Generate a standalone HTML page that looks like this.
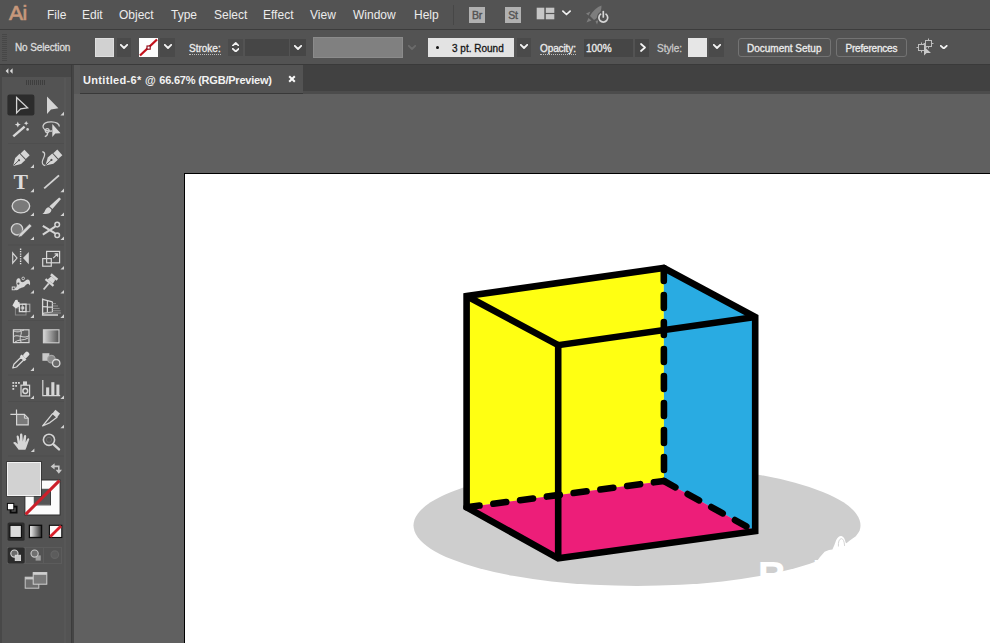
<!DOCTYPE html>
<html lang="en">
<head>
<meta charset="utf-8">
<title>Adobe Illustrator - Untitled-6</title>
<style>
html,body{margin:0;padding:0;background:#535353;}
body{width:990px;height:643px;overflow:hidden;position:relative;font-family:"Liberation Sans",sans-serif;color:#e6e6e6;}
#app{position:absolute;left:0;top:0;width:990px;height:643px;overflow:hidden;background:#535353;}
.abs{position:absolute;}
/* ---------- menu bar ---------- */
#menubar{left:0;top:0;width:990px;height:29px;background:#535353;}
#menubar .mi{position:absolute;top:8px;font-size:12px;line-height:15px;color:#ececec;white-space:nowrap;}
#ailogo{position:absolute;left:9px;top:1px;font-size:21px;line-height:24px;font-weight:normal;color:#c99b7c;letter-spacing:-0.4px;-webkit-text-stroke:0.7px #c4957a;}
.appbtn{position:absolute;top:7px;width:16px;height:16px;background:#b1b1b1;color:#535353;font-size:10.5px;line-height:17px;text-align:center;font-weight:normal;-webkit-text-stroke:0.4px #535353;letter-spacing:-0.3px;}
/* ---------- control bar ---------- */
#ctrlbar{left:0;top:29.4px;width:990px;height:35.6px;background:#535353;border-top:1px solid #3c3c3c;border-bottom:1px solid #3a3a3a;box-sizing:border-box;}
.ct{position:absolute;font-size:10px;line-height:12px;color:#ececec;white-space:nowrap;-webkit-text-stroke:0.3px;}
.dotted{border-bottom:1px dotted #bdbdbd;}
.dd{position:absolute;top:38px;height:19px;width:16px;background:#4a4a4a;}
.field{position:absolute;top:38px;height:19px;background:#464646;}
.cbtn{position:absolute;top:38px;height:18px;border:1px solid #737373;border-radius:3px;font-size:10px;line-height:18px;color:#f0f0f0;text-align:center;box-sizing:content-box;}
/* ---------- tab bar ---------- */
#tabbar{left:74px;top:65px;width:916px;height:29px;background:linear-gradient(to bottom,#414141 0,#414141 25.5px,#4c4c4c 26px,#4c4c4c 29px);}
#tab{left:79.5px;top:65px;width:223.5px;height:28px;background:#535353;border-bottom:1px solid #393939;}
#tabtxt{left:83px;top:73.5px;font-size:11px;line-height:13px;font-weight:bold;color:#f2f2f2;white-space:nowrap;}
/* ---------- canvas ---------- */
#canvas{left:74px;top:94px;width:916px;height:549px;background:#606060;}
#artboard{left:184px;top:173px;width:820px;height:500px;background:#fff;border:1px solid #000;}
/* ---------- toolbar ---------- */
#toolbar{left:0;top:65px;width:72px;height:578px;background:#535353;}
#tbhead{left:0;top:65px;width:72px;height:12px;background:#474747;}
</style>
</head>
<body>
<div id="app">

<!-- ================= MENU BAR ================= -->
<div id="menubar" class="abs">
  <div id="ailogo">Ai</div>
  <div class="mi" style="left:47px">File</div>
  <div class="mi" style="left:82px">Edit</div>
  <div class="mi" style="left:119px">Object</div>
  <div class="mi" style="left:171px">Type</div>
  <div class="mi" style="left:214px">Select</div>
  <div class="mi" style="left:263px">Effect</div>
  <div class="mi" style="left:310px">View</div>
  <div class="mi" style="left:353px">Window</div>
  <div class="mi" style="left:414px">Help</div>
  <div class="abs" style="left:453px;top:5px;width:1px;height:20px;background:#474747"></div>
  <div class="appbtn" style="left:469px">Br</div>
  <div class="appbtn" style="left:505px">St</div>
  <!-- arrange documents -->
  <svg class="abs" style="left:536px;top:7px" width="20" height="14" viewBox="0 0 20 14">
    <rect x="0.7" y="0.7" width="7.6" height="11.6" fill="#c6c6c6"/>
    <rect x="9.8" y="0.7" width="8.5" height="5.2" fill="#c6c6c6"/>
    <rect x="9.8" y="7.1" width="8.5" height="5.2" fill="#c6c6c6"/>
  </svg>
  <svg class="abs" style="left:562.3px;top:10.2px" width="9" height="6.3" viewBox="0 0 10 7"><polyline points="1,1.2 5,5 9,1.2" fill="none" stroke="#f2f2f2" stroke-width="1.9" stroke-linecap="round" stroke-linejoin="round"/></svg>
  <!-- gpu/rocket + power -->
  <svg class="abs" style="left:584px;top:3px" width="28" height="24" viewBox="0 0 28 24">
    <g fill="#7d7d7d">
      <path d="M17.5 2.5 C13 4 8.5 8 6 13 L10 17 C14.5 14.5 17.5 9 17.5 2.5Z"/>
      <path d="M6.5 8.5 L2 10.5 L4.5 12.5Z"/>
      <path d="M11.5 18.5 L13 21.5 L15 16Z"/>
      <path d="M4.5 15 L2.5 19.5 L7.5 17.5Z"/>
    </g>
    <circle cx="19.3" cy="14.6" r="4.3" fill="none" stroke="#535353" stroke-width="4.2"/>
    <path d="M16.6 11.2 A4.4 4.4 0 1 0 22 11.2" fill="none" stroke="#d6d6d6" stroke-width="1.7" stroke-linecap="round"/>
    <line x1="19.3" y1="8.6" x2="19.3" y2="14" stroke="#d6d6d6" stroke-width="1.7" stroke-linecap="round"/>
  </svg>
</div>

<!-- ================= CONTROL BAR ================= -->
<div id="ctrlbar" class="abs"></div>
<!-- grip -->
<div class="abs" style="left:2px;top:34px;width:5px;height:27px;background:repeating-linear-gradient(to bottom,#474747 0,#474747 1px,#535353 1px,#535353 2px)"></div>
<div class="ct" style="left:15px;top:41.7px;color:#dcdcdc;letter-spacing:-0.12px">No Selection</div>
<!-- fill swatch -->
<div class="abs" style="left:95px;top:38px;width:17px;height:17px;background:#d1d1d1;border:1px solid #dedede"></div>
<div class="dd" style="left:117px;width:14px"></div><svg class="abs" style="left:120px;top:44px" width="8" height="5" viewBox="0 0 8 5"><polyline points="0.8,0.8 4.0,4 7.2,0.8" fill="none" stroke="#f4f4f4" stroke-width="1.8" stroke-linecap="round" stroke-linejoin="round"/></svg>
<!-- stroke swatch -->
<div class="abs" style="left:139px;top:38px;width:19px;height:19px;background:#fdfdfd"></div>
<svg class="abs" style="left:139px;top:38px" width="19" height="19" viewBox="0 0 19 19"><line x1="1" y1="17.5" x2="18" y2="1.5" stroke="#c4121c" stroke-width="2.3"/><rect x="8" y="8" width="3.2" height="3.2" fill="#fff" stroke="#8c0010" stroke-width="1.1"/></svg>
<div class="dd" style="left:160px;width:15px"></div><svg class="abs" style="left:164px;top:44px" width="8" height="5" viewBox="0 0 8 5"><polyline points="0.8,0.8 4.0,4 7.2,0.8" fill="none" stroke="#f4f4f4" stroke-width="1.8" stroke-linecap="round" stroke-linejoin="round"/></svg>
<!-- stroke weight -->
<div class="ct dotted" style="left:189px;top:43px;line-height:11px">Stroke:</div>
<div class="field" style="left:228px;width:15px;top:39px;height:17px;background:#4b4b4b"></div>
<svg class="abs" style="left:231.5px;top:47.5px" width="7.5" height="4.5" viewBox="0 0 7.5 4.5"><polyline points="0.8,0.8 3.75,3.5 6.7,0.8" fill="none" stroke="#f4f4f4" stroke-width="1.8" stroke-linecap="round" stroke-linejoin="round"/></svg>
<svg class="abs" style="left:231.5px;top:41.5px" width="7.5" height="4.5" viewBox="0 0 7.5 4.5"><polyline points="0.8,3.7 3.75,0.9 6.7,3.7" fill="none" stroke="#f4f4f4" stroke-width="1.6" stroke-linecap="round" stroke-linejoin="round"/></svg>
<div class="field" style="left:245px;width:44px;top:39px;height:17px"></div>
<div class="field" style="left:290px;width:16px;top:39px;height:17px"></div><svg class="abs" style="left:294px;top:45px" width="8" height="5" viewBox="0 0 8 5"><polyline points="0.8,0.8 4.0,4 7.2,0.8" fill="none" stroke="#f4f4f4" stroke-width="1.8" stroke-linecap="round" stroke-linejoin="round"/></svg>
<!-- variable width profile (disabled) -->
<div class="abs" style="left:313px;top:37px;width:88px;height:19px;background:#808080;border:1px solid #8b8b8b"></div>
<svg class="abs" style="left:408px;top:45px" width="8" height="5" viewBox="0 0 8 5"><polyline points="0.8,0.8 4.0,4 7.2,0.8" fill="none" stroke="#6b6b6b" stroke-width="1.8" stroke-linecap="round" stroke-linejoin="round"/></svg>
<!-- brush definition -->
<div class="abs" style="left:428px;top:38px;width:86px;height:19px;background:#e3e3e3"></div>
<div class="abs" style="left:436px;top:46px;width:3px;height:3px;border-radius:2px;background:#111"></div>
<div class="ct" style="left:452px;top:42.6px;color:#151515">3 pt. Round</div>
<div class="dd" style="left:517px;width:14px"></div><svg class="abs" style="left:520px;top:44px" width="8" height="5" viewBox="0 0 8 5"><polyline points="0.8,0.8 4.0,4 7.2,0.8" fill="none" stroke="#f4f4f4" stroke-width="1.8" stroke-linecap="round" stroke-linejoin="round"/></svg>
<!-- opacity -->
<div class="ct dotted" style="left:540px;top:43px;line-height:11px;letter-spacing:-0.1px">Opacity:</div>
<div class="field" style="left:584px;width:49px;top:39px;height:18px"></div>
<div class="ct" style="left:586px;top:42.6px">100%</div>
<div class="field" style="left:635px;width:14px;top:39px;height:18px"></div>
<svg class="abs" style="left:639.5px;top:43px" width="6" height="9" viewBox="0 0 6 9"><polyline points="1,1 5,4.5 1,8" fill="none" stroke="#f4f4f4" stroke-width="1.7" stroke-linecap="round" stroke-linejoin="round"/></svg>
<!-- style -->
<div class="ct" style="left:657px;top:42.6px;color:#c9c9c9">Style:</div>
<div class="abs" style="left:688px;top:38px;width:19px;height:19px;background:#e6e6e6"></div>
<div class="dd" style="left:709px;width:15px"></div><svg class="abs" style="left:713px;top:44px" width="8" height="5" viewBox="0 0 8 5"><polyline points="0.8,0.8 4.0,4 7.2,0.8" fill="none" stroke="#f4f4f4" stroke-width="1.8" stroke-linecap="round" stroke-linejoin="round"/></svg>
<!-- buttons -->
<div class="cbtn" style="left:738px;width:91px;height:17px"></div>
<div class="ct" style="left:747px;top:42.6px">Document Setup</div>
<div class="cbtn" style="left:836px;width:69px;height:17px"></div>
<div class="ct" style="left:845.5px;top:42.6px;letter-spacing:-0.2px">Preferences</div>
<!-- align-to icon -->
<svg class="abs" style="left:916px;top:38px" width="19" height="19" viewBox="0 0 19 19">
  <g fill="none" stroke="#bdbdbd" stroke-width="1">
    <rect x="2.5" y="6.5" width="6" height="6"/>
    <rect x="9.5" y="2.5" width="6" height="6"/>
    <path d="M0.5 9.5h2M8.5 9.5h2M5.5 4.5v2M5.5 12.5v2M12.5 0.5v2M12.5 8.5v2M7.5 5.5h2M15.5 5.5h2"/>
  </g>
  <path d="M8 8.5 L8 17.5 L10.6 15 L15 15 Z" fill="#c9c9c9"/>
</svg>
<svg class="abs" style="left:940px;top:44.5px" width="7.5" height="4.5" viewBox="0 0 7.5 4.5"><polyline points="0.8,0.8 3.75,3.5 6.7,0.8" fill="none" stroke="#f4f4f4" stroke-width="1.8" stroke-linecap="round" stroke-linejoin="round"/></svg>

<!-- ================= TAB BAR ================= -->
<div id="tabbar" class="abs"></div>
<div class="abs" style="left:74px;top:65px;width:5.5px;height:29px;background:#585858"></div>
<div id="tab" class="abs"></div>
<div id="tabtxt" class="abs"><span style="letter-spacing:0.32px">Untitled-6* @ </span><span style="letter-spacing:-0.22px">66.67% (RGB/Preview)</span></div>
<svg class="abs" style="left:288px;top:75px" width="8" height="8" viewBox="0 0 8 8"><path d="M1.2 1.2 L6.8 6.8 M6.8 1.2 L1.2 6.8" stroke="#fafafa" stroke-width="2" stroke-linecap="butt"/></svg>

<!-- ================= CANVAS ================= -->
<div id="canvas" class="abs"></div>
<div id="artboard" class="abs"></div>
<svg id="art" class="abs" style="left:185px;top:174px" width="805" height="469" viewBox="185 174 805 469">
  <!-- shadow -->
  <ellipse cx="637" cy="525.5" rx="223.5" ry="60.5" fill="#cecece"/>
  <!-- watermark (white, only visible over the shadow) -->
  <g fill="#ffffff">
    <text x="757.7" y="590.3" font-family="Liberation Sans, sans-serif" font-weight="bold" font-size="40" letter-spacing="1.6">Bai</text>
    <path d="M815.5 566 L816 562.6 L819.8 557.2 L824.6 551.8 L829 550 L832.4 549.6 L834.4 545 L836.2 540 Q838.5 535.6 841.4 536 Q844.6 536.6 845.6 542.6 L846.4 543.2 L849.8 540.4 L855.8 536.2 L859.6 531 L872 531 L872 580 L815.5 580 Z"/>
  </g>
  <path d="M838.4 546.5 Q838 539.4 841.3 538.6 Q844.2 538.8 844.6 546" fill="none" stroke="#d0d0d0" stroke-width="0.9"/>
  <!-- faces -->
  <polygon points="466.6,296 663.8,268 664,481 466.6,507.3" fill="#ffff12"/>
  <polygon points="663.8,268 755.2,317 755.2,531.2 664,481" fill="#29abe2"/>
  <polygon points="466.6,507.3 664,481 755.2,531.2 558.2,558.3" fill="#ed1e79"/>
  <!-- hidden (dashed) edges -->
  <g fill="none" stroke="#000" stroke-width="6.6" stroke-linecap="round" stroke-dasharray="13 14">
    <path d="M663.8 268 L664 481"/>
    <path d="M466.6 507.3 L664 481"/>
    <path d="M664 481 L755.2 531.2"/>
  </g>
  <!-- visible edges -->
  <g fill="none" stroke="#000" stroke-width="6.6" stroke-linejoin="miter" stroke-miterlimit="10" stroke-linecap="butt">
    <path d="M466.6 296 L663.8 268 L755.2 317 L755.2 531.2 L558.2 558.3 L466.6 507.3 Z"/>
    <path d="M466.6 296 L558.2 345.2 L755.2 317"/>
    <path d="M558.2 345.2 V558.3"/>
  </g>
</svg>

<!-- ================= TOOLBAR ================= -->
<div id="toolbar" class="abs"></div>
<div id="tbhead" class="abs"></div>
<div class="abs" style="left:0;top:65px;width:2px;height:578px;background:#484848"></div>
<div class="abs" style="left:71.2px;top:65px;width:2.7px;height:578px;background:linear-gradient(to right,#3c3c3c 0,#3c3c3c 40%,#454545 40%,#454545 100%)"></div>
<div class="abs" style="left:64px;top:78px;width:1.6px;height:565px;background:#575757"></div>
<svg id="tools" class="abs" style="left:0;top:65px" width="72" height="578" viewBox="0 65 72 578">
  <!-- collapse chevrons + grip -->
  <path d="M8.4 68.3 L5.6 71 L8.4 73.7Z M12.6 68.3 L9.8 71 L12.6 73.7Z" fill="#dadada"/>
  <g stroke="#3e3e3e" stroke-width="1"><path d="M26.5 80v5M28.5 80v5M30.5 80v5M32.5 80v5M34.5 80v5M36.5 80v5M38.5 80v5M40.5 80v5M42.5 80v5M44.5 80v5"/></g>
  <g fill="#4e4e4e"><rect x="8" y="143" width="56" height="1"/><rect x="8" y="244.5" width="56" height="1"/><rect x="8" y="320" width="56" height="1"/><rect x="8" y="374.5" width="56" height="1"/><rect x="8" y="401" width="56" height="1"/><rect x="8" y="455.5" width="56" height="1"/></g>
  <g fill="#d2d2d2"><path d="M64 111.80000000000001V115.4H60.4Z"/><path d="M34 164.3V167.9H30.4Z"/><path d="M34 188.6V192.2H30.4Z"/><path d="M64 188.6V192.2H60.4Z"/><path d="M34 212.5V216.1H30.4Z"/><path d="M64 212.5V216.1H60.4Z"/><path d="M34 236.4V240H30.4Z"/><path d="M64 236.4V240H60.4Z"/><path d="M34 266.0V269.6H30.4Z"/><path d="M64 266.0V269.6H60.4Z"/><path d="M34 289.9V293.5H30.4Z"/><path d="M64 289.9V293.5H60.4Z"/><path d="M34 314.29999999999995V317.9H30.4Z"/><path d="M64 314.29999999999995V317.9H60.4Z"/><path d="M34 367.29999999999995V370.9H30.4Z"/><path d="M34 395.4V399H30.4Z"/><path d="M64 395.4V399H60.4Z"/><path d="M64 424.7V428.3H60.4Z"/><path d="M34.4 448.4V452H30.799999999999997Z"/></g>
  <!-- selection (active) -->
  <rect x="7.4" y="94.5" width="27" height="21" rx="2.2" fill="#2c2c2c"/>
  <path d="M16.6 97.6 L16.6 113 L20.6 108.9 L27.6 107.8 Z" fill="none" stroke="#d4d4d4" stroke-width="1.3" stroke-linejoin="miter"/>
  <!-- direct selection -->
  <path d="M47 96.6 L47 114 L51 109.6 L58.4 108.3 Z" fill="#d4d4d4"/>
  <!-- magic wand -->
  <path d="M13.3 136.4 L24.6 126.6" stroke="#d8d8d8" stroke-width="2.4" stroke-linecap="butt"/>
  <path d="M17.8 121.6 l0.9 2.1 2.1 0.9 -2.1 0.9 -0.9 2.1 -0.9 -2.1 -2.1 -0.9 2.1 -0.9Z" fill="#d8d8d8"/>
  <path d="M26.2 121 l0.7 1.6 1.6 0.7 -1.6 0.7 -0.7 1.6 -0.7 -1.6 -1.6 -0.7 1.6 -0.7Z" fill="#d8d8d8"/>
  <circle cx="27.6" cy="129.4" r="1.3" fill="#d8d8d8"/>
  <!-- lasso -->
  <g fill="none" stroke="#d0d0d0" stroke-width="1.3">
    <path d="M52 131 C46 131.5 42.6 129 43 126.2 C43.5 123 47.5 121.7 51.5 121.8 C56 121.9 59.4 123.6 59.3 126.4"/>
    <circle cx="47.2" cy="130.6" r="1.9"/>
    <path d="M47.6 132.5 C47.8 134.5 46.5 136 44.8 136.6"/>
  </g>
  <path d="M52.3 124 L52.3 137 L55.3 133.6 L60.6 133.2 Z" fill="#d8d8d8"/>
  <!-- pen -->
  <g transform="translate(13.1 165.9) rotate(-44)">
    <path d="M0 0 L7 -4.2 L13 -4.2 L13 4.2 L7 4.2 Z" fill="#d6d6d6"/>
    <rect x="14" y="-3.8" width="5.4" height="7.6" fill="#d6d6d6"/>
    <path d="M0.5 0 H7.5" stroke="#535353" stroke-width="0.9"/><circle cx="8.2" cy="0" r="1.1" fill="#535353"/>
  </g>
  <!-- curvature -->
  <g transform="translate(45.4 165.4) rotate(-42)">
    <path d="M0 0 L7 -4.2 L13 -4.2 L13 4.2 L7 4.2 Z" fill="#d6d6d6"/>
    <rect x="14" y="-3.8" width="5.4" height="7.6" fill="#d6d6d6"/>
    <path d="M0.5 0 H7.5" stroke="#535353" stroke-width="0.9"/><circle cx="8.2" cy="0" r="1.1" fill="#535353"/>
  </g>
  <path d="M42.3 151.6 C46.5 152.5 44.2 157 42.6 160.4 C41.6 163 42.6 165.2 45.2 165.6" fill="none" stroke="#d0d0d0" stroke-width="1.2"/>
  <!-- type -->
  <text x="0" y="0" transform="translate(13.6 188.7) scale(1.06 1)" font-family="Liberation Serif, serif" font-weight="bold" font-size="20.5" fill="#dcdcdc">T</text>
  <!-- line segment -->
  <path d="M44.2 188.4 L59 175.4" stroke="#d2d2d2" stroke-width="1.9"/>
  <!-- ellipse -->
  <ellipse cx="20.9" cy="206.1" rx="8.8" ry="6.8" fill="#7a7a7a" stroke="#d8d8d8" stroke-width="1.3"/>
  <!-- paintbrush -->
  <path d="M59.2 197.4 L61 199 L52.4 209 L49.4 206.2 Z" fill="#d6d6d6"/>
  <path d="M49 207.2 L51.4 209.4 C51.6 212.6 48 214.6 42.4 214 C45.4 212.6 44.6 207.6 49 207.2Z" fill="#d6d6d6"/>
  <!-- shaper -->
  <circle cx="17" cy="229.3" r="5.7" fill="#7a7a7a" stroke="#d2d2d2" stroke-width="1.3"/>
  <path d="M29.6 223.8 L31.8 226 L21.6 236.2 L18 237.6 L19.4 234 Z" fill="#d6d6d6" stroke="#535353" stroke-width="0.6"/>
  <!-- scissors -->
  <g stroke="#d4d4d4" fill="none">
    <path d="M42.8 225.8 L55.2 233.4" stroke-width="2"/>
    <path d="M42.8 234.6 L55.2 226.6" stroke-width="2"/>
    <circle cx="57.2" cy="224.6" r="2.3" stroke-width="1.5"/>
    <circle cx="57.2" cy="235.2" r="2.3" stroke-width="1.5"/>
  </g>
  <!-- reflect -->
  <path d="M12.7 253 L12.7 263.2 L17 258.1 Z" fill="none" stroke="#d2d2d2" stroke-width="1.2"/>
  <path d="M28.8 252 L28.8 264.2 L23 258.1 Z" fill="#d4d4d4"/>
  <path d="M20.6 248.6 V265" stroke="#e0e0e0" stroke-width="1.4" stroke-dasharray="1.3 1.1"/>
  <!-- scale -->
  <g fill="none" stroke="#d6d6d6" stroke-width="1.2">
    <rect x="46.6" y="251.4" width="13" height="11.4"/>
    <rect x="42.7" y="258.6" width="8.6" height="7.6"/>
    <path d="M53.2 258.2 L57.6 253.8 M54.6 253.8 H57.6 V256.8"/>
  </g>
  <!-- width / warp -->
  <path d="M13.6 288.6 C16 288.8 17.4 286.6 16.6 283.6 C15.6 280 17.4 277.4 19.4 278.4 C21 279.2 20 281.4 21.8 282 C24.4 282.8 25 279.6 27.6 279.4 C30 279.2 30.4 282.4 30 285.4 C28 282.6 26.8 283.8 25 286 C23 288.4 19.6 287.4 18.4 289.6 C17 290.8 14.6 290.4 13.6 288.6Z" fill="#d6d6d6"/>
  <circle cx="18.4" cy="283.6" r="1.5" fill="#535353" stroke="#d6d6d6" stroke-width="0.9"/>
  <circle cx="23.2" cy="278.4" r="1.3" fill="#535353" stroke="#d6d6d6" stroke-width="0.9"/>
  <rect x="12.2" y="287" width="2.8" height="2.8" fill="#535353" stroke="#e0e0e0" stroke-width="0.9"/>
  <!-- puppet pin -->
  <g transform="translate(50.6 281.2) rotate(40)">
    <rect x="-4.2" y="-6.8" width="8.4" height="2.6" fill="#d6d6d6"/>
    <path d="M-2.6 -4.2 H2.6 L3.4 0.6 H-3.4 Z" fill="#d6d6d6"/>
    <rect x="-5.2" y="0.6" width="10.4" height="2.2" fill="#d6d6d6"/>
    <rect x="-0.9" y="2.8" width="1.8" height="8" fill="#d0d0d0"/>
  </g>
  <!-- shape builder -->
  <g fill="none">
    <rect x="15.4" y="308" width="10.6" height="7" stroke="#8a8a8a" stroke-width="1"/>
    <rect x="22.4" y="304.2" width="7.4" height="7.4" stroke="#a8a8a8" stroke-width="1.1"/>
    <rect x="19.4" y="304.2" width="6.6" height="7.4" stroke="#dcdcdc" stroke-width="1.3"/>
  </g>
  <path d="M12.4 305.4 L15.4 300 L17.4 299.8 L18.2 302 L19.6 302.2 L19.2 306.4 L15.8 308.6 Z" fill="#dedede"/>
  <rect x="21.4" y="306.4" width="2.6" height="3" fill="#cfcfcf"/>
  <!-- perspective grid -->
  <g fill="none" stroke="#d6d6d6">
    <path d="M42.6 298.6 V315 H58" stroke-width="1.3"/>
    <path d="M42.6 299.4 L52.4 301.8 M42.6 306.6 L52.4 307.2 M42.6 313.4 L52.4 312 M47.4 300.4 V313 M52.4 301.8 V312" stroke-width="1.2"/>
    <path d="M52.4 303.6 H56 M52.4 306 H58 M52.4 308.4 H59.6 M52.4 310.8 H60.6 M44 313 H61" stroke-width="0.9" stroke="#9a9a9a"/>
  </g>
  <!-- mesh -->
  <g fill="none" stroke="#d4d4d4">
    <rect x="13.4" y="329.8" width="15.6" height="12.8" stroke-width="1.2" fill="#5e5e5e"/>
    <path d="M13.4 336.6 C18 333.6 24 339.6 29 335.6 M20.4 329.8 C23.4 334 17.6 338 21.6 342.6 M14 331 C18 333 21 331 24 330 M15 342 C18 339 24 341 28 338" stroke-width="1"/>
  </g>
  <!-- gradient -->
  <defs>
    <linearGradient id="gtool" x1="0" x2="1" y1="0" y2="0"><stop offset="0" stop-color="#d8d8d8"/><stop offset="1" stop-color="#505050"/></linearGradient>
    <linearGradient id="gbtn" x1="0" x2="1" y1="0" y2="0"><stop offset="0" stop-color="#fafafa"/><stop offset="1" stop-color="#2a2a2a"/></linearGradient>
  </defs>
  <rect x="43.4" y="329.8" width="15.6" height="13" fill="url(#gtool)" stroke="#d0d0d0" stroke-width="1.1"/>
  <!-- eyedropper -->
  <g transform="translate(12.8 368) rotate(-44.5)">
    <path d="M0 0 L3.4 -1.9 H13.4 V1.9 H3.4 Z" fill="#535353" stroke="#d8d8d8" stroke-width="1.2" stroke-linejoin="round"/>
    <rect x="13.2" y="-3.4" width="2.6" height="6.8" fill="#dcdcdc"/>
    <rect x="15.8" y="-2.3" width="6.2" height="4.6" rx="1.6" fill="#dcdcdc"/>
  </g>
  <!-- blend -->
  <rect x="42.4" y="353.2" width="7" height="7.6" fill="#c8c8c8"/>
  <circle cx="51.4" cy="359.2" r="3.8" fill="#8a8a8a" stroke="#a6a6a6" stroke-width="1.1"/>
  <circle cx="56.2" cy="363.2" r="3.7" fill="#6a6a6a" stroke="#dadada" stroke-width="1.3"/>
  <!-- symbol sprayer -->
  <g fill="#d4d4d4">
    <rect x="12.4" y="382" width="1.8" height="1.8"/><rect x="15.2" y="382" width="1.8" height="1.8"/><rect x="18" y="382" width="1.8" height="1.8"/>
    <rect x="12.4" y="385" width="1.8" height="1.8"/><rect x="15.2" y="385" width="1.8" height="1.8"/>
    <rect x="12.4" y="388" width="1.8" height="1.8"/>
    <rect x="23" y="381.4" width="4" height="3.6"/>
  </g>
  <rect x="21" y="385.2" width="8.6" height="10.8" fill="#535353" stroke="#d6d6d6" stroke-width="1.2"/>
  <circle cx="25.3" cy="391" r="2.4" fill="none" stroke="#d6d6d6" stroke-width="1.5"/>
  <!-- column graph -->
  <path d="M42.8 380 V395.6 H60.2" fill="none" stroke="#d6d6d6" stroke-width="1.2"/>
  <rect x="46.1" y="387.4" width="3.1" height="8.2" fill="#d6d6d6"/>
  <rect x="51.3" y="382.2" width="3.1" height="13.4" fill="#d6d6d6"/>
  <rect x="56.4" y="384.6" width="3" height="11" fill="#d6d6d6"/>
  <!-- artboard -->
  <path d="M10.4 414.4 H16.4 M16.5 409.4 V414.4" stroke="#d8d8d8" stroke-width="1.2" fill="none"/>
  <path d="M16.6 414.4 H24.4 L28.2 418.2 V424.8 H16.6 Z" fill="#7a7a7a" stroke="#d6d6d6" stroke-width="1.2"/>
  <path d="M24.4 414.4 V418.2 H28.2" fill="none" stroke="#d6d6d6" stroke-width="1"/>
  <!-- slice / knife -->
  <path d="M42.6 426 L52.6 413.6 L57 417.2 L50 422.6 Z" fill="#535353" stroke="#d6d6d6" stroke-width="1.2" stroke-linejoin="round"/>
  <path d="M52.4 413.4 L55.4 409.8 L60 413.6 L57 417.4 Z" fill="#d6d6d6"/>
  <!-- hand -->
  <path d="M18.6 449.8 C17 447.6 15.2 445 13.2 443 C13.6 441.6 15.4 441.6 16.8 443.2 L17.8 444.2 L16.6 436.6 C16.6 435.2 18.4 435 18.8 436.6 L20 441.6 L20 434.8 C20.2 433.2 22.2 433.2 22.4 434.8 L22.8 441.4 L24 435.8 C24.4 434.4 26.2 434.8 26.2 436.2 L25.6 442.4 L27.4 438.8 C28 437.6 29.6 438.2 29.2 439.6 L26.4 447.4 L25.4 449.8 Z" fill="#d6d6d6"/>
  <!-- zoom -->
  <circle cx="49" cy="439.8" r="5.6" fill="none" stroke="#d4d4d4" stroke-width="1.6"/>
  <circle cx="49" cy="439.8" r="2.6" fill="none" stroke="#6e6e6e" stroke-width="1"/>
  <path d="M53.2 444.2 L59 449.4" stroke="#d4d4d4" stroke-width="2.4" stroke-linecap="round"/>
  <!-- swap arrows -->
  <g fill="none" stroke="#c8c8c8" stroke-width="1.6">
    <path d="M54 466.4 H58.8 V470.6"/>
  </g>
  <path d="M50.6 466.4 L54.6 463.2 V469.6Z M58.8 473.8 L55.6 469.8 H62Z" fill="#c8c8c8"/>
  <!-- stroke box -->
  <rect x="24.5" y="479.5" width="36" height="36" fill="#2f2f2f"/>
  <rect x="34.3" y="489.3" width="16.2" height="15.6" fill="#555555"/>
  <path d="M25.4 480.4 H59.6 V514.6 H25.4 Z M34.8 489.8 V504.4 H50 V489.8 Z" fill="#fcfcfc" fill-rule="evenodd"/>
  <rect x="34.3" y="489.3" width="16.2" height="15.6" fill="none" stroke="#3a3a3a" stroke-width="1"/>
  <path d="M25.6 514.4 L59.4 480.6" stroke="#cc1f2a" stroke-width="3"/>
  <!-- fill box -->
  <rect x="6.4" y="461.2" width="35.4" height="35.4" fill="#333"/>
  <rect x="7" y="462" width="34" height="34" fill="#f2f2f2"/>
  <rect x="8" y="463" width="32" height="32" fill="#d2d2d2"/>
  <!-- default fill/stroke -->
  <rect x="10.6" y="506.6" width="6" height="6" fill="none" stroke="#0a0a0a" stroke-width="1.8"/>
  <rect x="7.4" y="503.4" width="6.4" height="6.4" fill="#fafafa" stroke="#0a0a0a" stroke-width="1"/>
  <!-- colour / gradient / none -->
  <rect x="7.6" y="522.4" width="17" height="18.4" rx="1.6" fill="#2c2c2c"/>
  <rect x="9.9" y="525.3" width="11.5" height="12.2" fill="#dcdcdc" stroke="#0c0c0c" stroke-width="1.1"/>
  <rect x="29.4" y="525.3" width="12.2" height="12.2" fill="url(#gbtn)" stroke="#0c0c0c" stroke-width="1.3"/>
  <rect x="49.4" y="525.3" width="12.4" height="12.2" fill="#fbfbfb" stroke="#0c0c0c" stroke-width="1.1"/>
  <path d="M50.2 536.8 L61 526" stroke="#d91f2a" stroke-width="2.8"/>
  <!-- draw modes -->
  <g fill="none" stroke="#5c5c5c" stroke-width="1"><rect x="7.5" y="547.5" width="18" height="16"/><rect x="25.5" y="547.5" width="18" height="16"/><rect x="43.5" y="547.5" width="18" height="16"/></g>
  <rect x="7.6" y="547.4" width="17" height="16" rx="1.6" fill="#2c2c2c"/>
  <circle cx="14.4" cy="553.6" r="3.6" fill="#6a6a6a" stroke="#cfcfcf" stroke-width="1.2"/>
  <rect x="15.2" y="555.2" width="5.4" height="5.4" fill="#c8c8c8" stroke="#e0e0e0" stroke-width="0.8"/>
  <rect x="35.6" y="555.4" width="5.2" height="5.2" fill="#9c9c9c"/>
  <circle cx="34.6" cy="553.6" r="3.6" fill="#6f6f6f" stroke="#c2c2c2" stroke-width="1.2"/>
  <circle cx="54.8" cy="554.6" r="3.8" fill="#5c5c5c" stroke="#646464" stroke-width="1.2"/>
  <!-- screen mode -->
  <rect x="25.2" y="577.2" width="13.6" height="11" fill="#6e6e6e" stroke="#c8c8c8" stroke-width="1"/>
  <rect x="25.2" y="577.2" width="13.6" height="2.2" fill="#c8c8c8"/>
  <rect x="33.2" y="572.6" width="13.6" height="11.6" fill="#7a7a7a" stroke="#d0d0d0" stroke-width="1"/>
  <rect x="33.2" y="572.6" width="13.6" height="2.2" fill="#d0d0d0"/>
</svg>

</div>
</body>
</html>
